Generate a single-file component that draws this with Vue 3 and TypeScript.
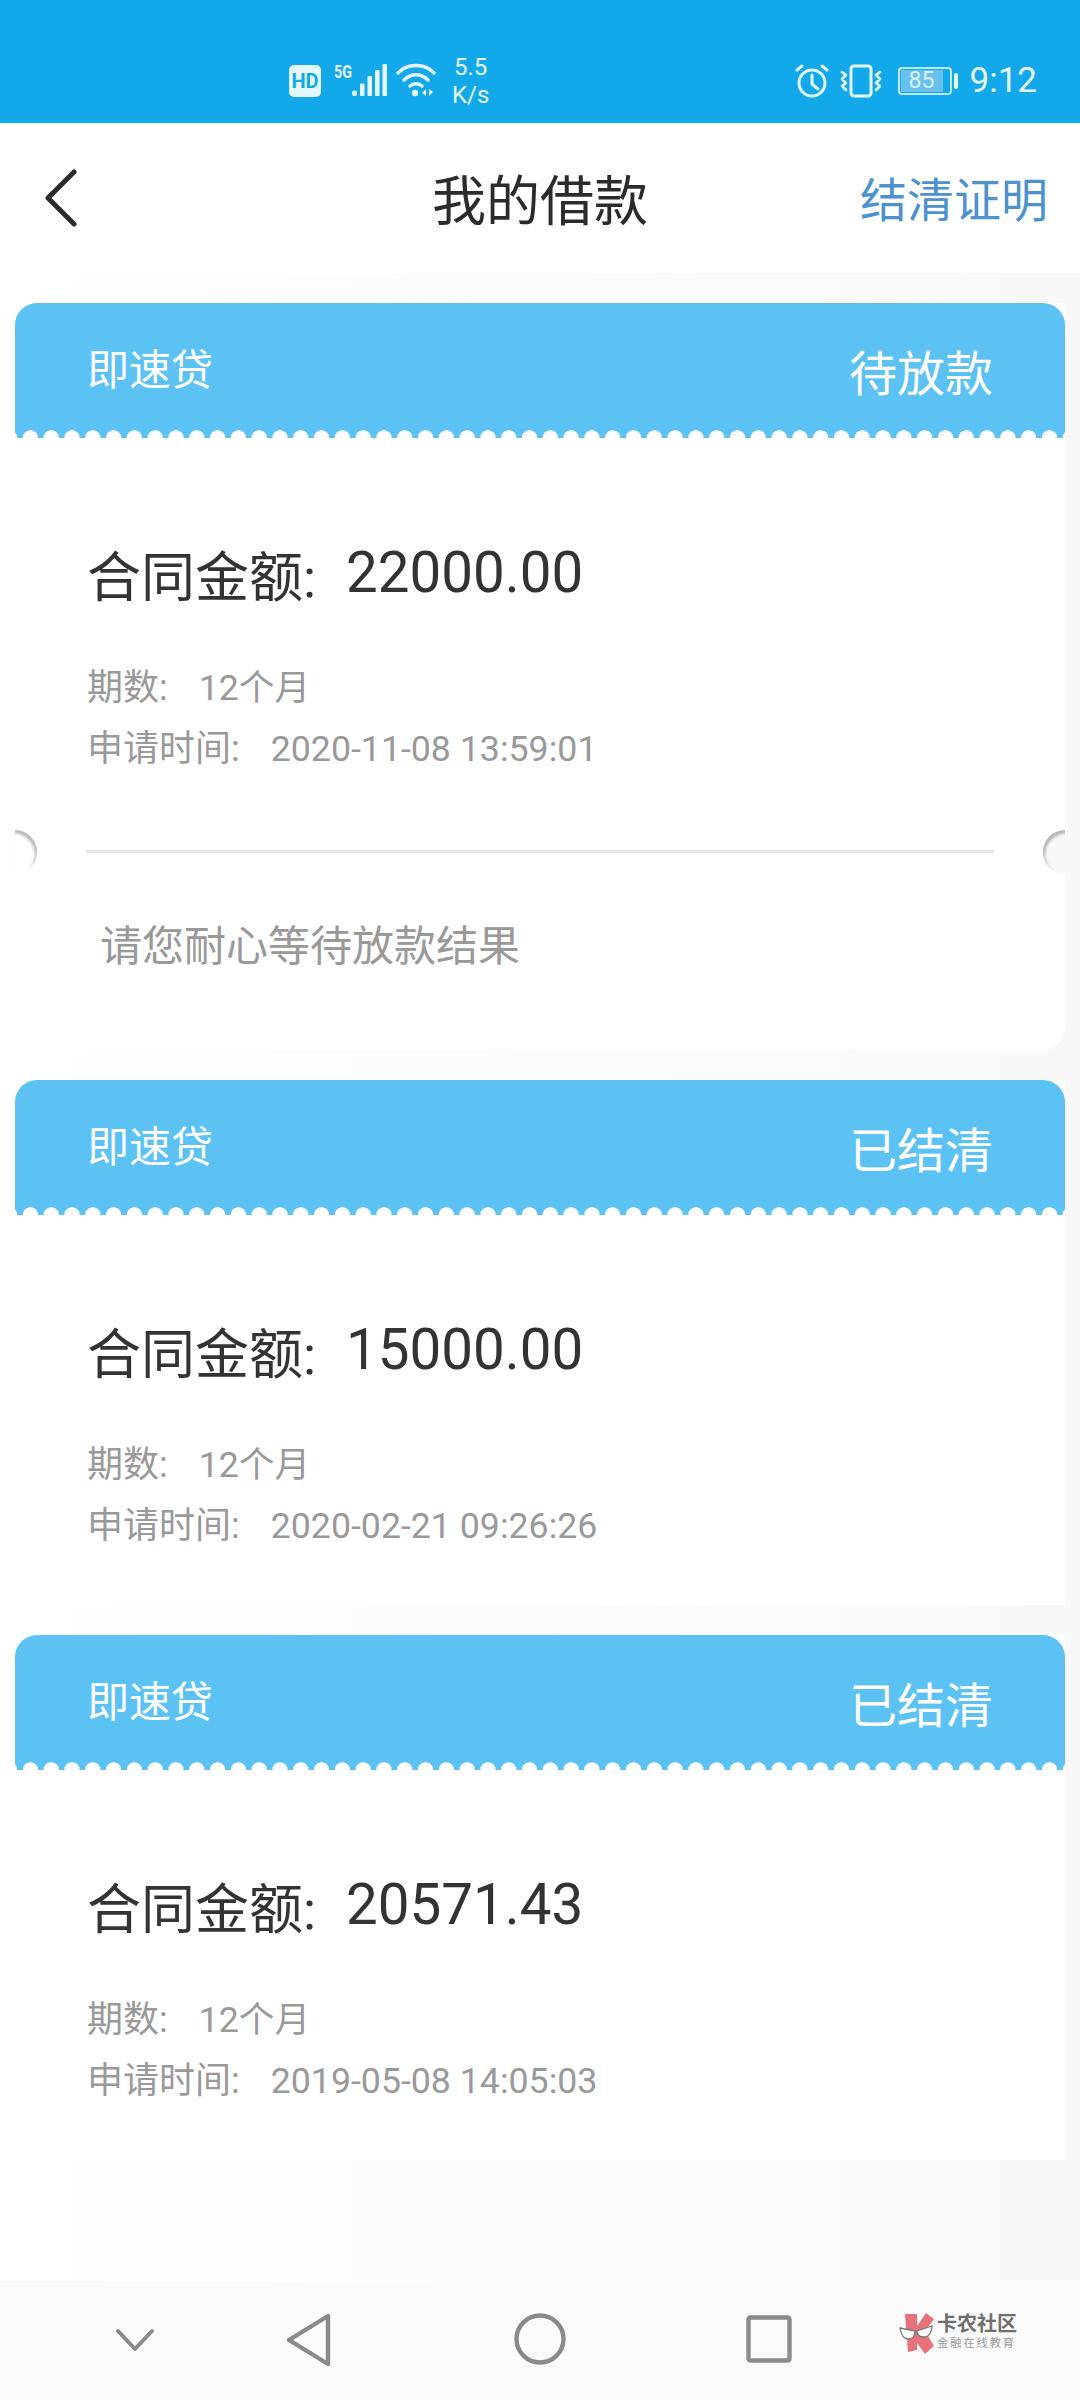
<script setup lang="ts">
interface Loan {
  status: string
  amount: string
  months: string
  applied: string
  note?: string
}

const loans: Loan[] = [
  { status: '待放款', amount: '22000.00', months: '12个月', applied: '2020-11-08 13:59:01', note: '请您耐心等待放款结果' },
  { status: '已结清', amount: '15000.00', months: '12个月', applied: '2020-02-21 09:26:26' },
  { status: '已结清', amount: '20571.43', months: '12个月', applied: '2019-05-08 14:05:03' },
]
</script>

<template>
  <div class="page">
    <div class="status-bar">
      <div class="status-left">
        <span class="hd">HD</span>
        <svg class="signal" width="53" height="33" viewBox="0 0 53 33">
          <text x="0" y="14" class="five-g" textLength="18" lengthAdjust="spacingAndGlyphs">5G</text>
          <g fill="#e3f7ff">
            <rect x="18" y="26.5" width="5" height="5.5" rx="2" />
            <rect x="26" y="19.5" width="4.5" height="12.5" rx="1" />
            <rect x="33.5" y="12" width="4.5" height="20" rx="1" />
            <rect x="41" y="6" width="4.5" height="26" rx="1" />
            <rect x="48.5" y="0" width="4.5" height="32" rx="1" />
          </g>
        </svg>
        <svg class="wifi" width="40" height="33" viewBox="0 0 40 33" fill="none" stroke="#e3f7ff" stroke-width="3.4" stroke-linecap="round">
          <path d="M2 9C11 -1 29 -1 38 9" />
          <path d="M8 16C15 9 25 9 32 16" />
          <path d="M14 22C17 19 23 19 26 22" />
          <circle cx="19" cy="29" r="3.2" fill="#e3f7ff" stroke="none" />
          <path d="M30 25v7l-4-3zM33 25v7l4-4z" fill="#e3f7ff" stroke="none" />
        </svg>
        <span class="speed">5.5<br />K/s</span>
      </div>
      <div class="status-right">
        <svg class="alarm" width="34" height="34" viewBox="0 0 34 34" fill="none" stroke="#e3f7ff" stroke-width="3" stroke-linecap="round">
          <circle cx="17" cy="19" r="13" />
          <path d="M17 11v9l6 5" />
          <path d="M2 6l5-4M32 6l-5-4" />
        </svg>
        <svg class="vibrate" width="44" height="34" viewBox="0 0 44 34" fill="none" stroke="#e3f7ff" stroke-width="3" stroke-linecap="round" stroke-linejoin="round">
          <rect x="12" y="2" width="20" height="30" rx="3" />
          <path d="M3 8l4 3-4 4 4 4-4 3 4 4M41 8l-4 3 4 4-4 4 4 3-4 4" stroke-width="2.6" />
        </svg>
        <div class="battery">
          <span class="battery-shell"><span class="battery-level">85</span></span>
          <span class="battery-cap"></span>
        </div>
        <span class="clock">9:12</span>
      </div>
    </div>

    <header class="nav-bar">
      <svg class="back" width="34" height="58" viewBox="0 0 34 58" fill="none" stroke="#2b2b2b" stroke-width="5" stroke-linecap="round" stroke-linejoin="round">
        <path d="M30 3L4 29l26 26" />
      </svg>
      <h1 class="title">我的借款</h1>
      <span class="proof">结清证明</span>
    </header>

    <main class="list">
      <section v-for="(loan, i) in loans" :key="i" class="card" :class="{ 'has-note': loan.note }">
        <div class="card-head">
          <span class="product">即速贷</span>
          <span class="status">{{ loan.status }}</span>
        </div>
        <div class="scallop"></div>
        <div class="card-body">
          <p class="amount"><span class="amount-label">合同金额:</span><span class="amount-value">{{ loan.amount }}</span></p>
          <p class="meta"><span class="meta-label">期数:</span><span class="meta-value">{{ loan.months }}</span></p>
          <p class="meta"><span class="meta-label">申请时间:</span><span class="meta-value">{{ loan.applied }}</span></p>
        </div>
        <div v-if="loan.note" class="card-foot">
          <span class="notch notch-left"></span>
          <span class="notch notch-right"></span>
          <div class="divider"></div>
          <p class="note">{{ loan.note }}</p>
        </div>
      </section>
    </main>

    <footer class="sys-nav">
      <svg class="nav-down" width="40" height="24" viewBox="0 0 40 24" fill="none" stroke="#8a8a8a" stroke-width="4" stroke-linecap="round" stroke-linejoin="round">
        <path d="M3 3l17 18L37 3" />
      </svg>
      <svg class="nav-back" width="46" height="54" viewBox="0 0 46 54" fill="none" stroke="#8a8a8a" stroke-width="4.4" stroke-linejoin="round">
        <path d="M42 3v48L3 27z" />
      </svg>
      <svg class="nav-home" width="52" height="52" viewBox="0 0 52 52" fill="none" stroke="#8a8a8a" stroke-width="4.4">
        <circle cx="26" cy="26" r="23.5" />
      </svg>
      <svg class="nav-recent" width="46" height="48" viewBox="0 0 46 48" fill="none" stroke="#8a8a8a" stroke-width="4.4" stroke-linejoin="round">
        <rect x="2.5" y="2.5" width="41" height="43" rx="2" />
      </svg>
      <div class="logo">
        <svg width="36" height="41" viewBox="0 0 36 41">
          <path d="M6 1h12v12L27 0l8 6-9 12 9 15-9 8-8-11v7L9 39z" fill="#e8727a" />
          <path d="M1 15l15 3c0 5-2 8-7 8s-7-5-8-11zM18 18l15-5c0 6-3 11-8 11s-7-3-7-6z" fill="#fff" stroke="#777" stroke-width="1.3" />
        </svg>
        <div class="logo-text">
          <span class="logo-name">卡农社区</span>
          <span class="logo-sub">金融在线教育</span>
        </div>
      </div>
    </footer>
  </div>
</template>

<style scoped>
.page {
  width: 1080px;
  height: 2400px;
  display: flex;
  flex-direction: column;
  background: linear-gradient(90deg, #fff 0%, #fdfdfd 25%, #f8f8f8 100%);
  font-family: Roboto, "Noto Sans CJK SC", sans-serif;
  overflow: hidden;
}

/* Status bar */
.status-bar {
  height: 123px;
  flex: none;
  display: flex;
  justify-content: space-between;
  align-items: center;
  padding: 38px 43px 0 289px;
  box-sizing: border-box;
  background: #12a8ea;
  color: #e3f7ff;
}

.status-left,
.status-right {
  display: flex;
  align-items: center;
}

.hd {
  width: 32px;
  height: 32px;
  border-radius: 5px;
  background: #e3f7ff;
  color: #12a8ea;
  font-size: 20px;
  font-weight: 700;
  line-height: 32px;
  text-align: center;
}

.signal {
  margin-left: 13px;
  overflow: visible;
}

.wifi {
  margin-left: 9px;
  overflow: visible;
}

.five-g {
  font-family: Roboto, sans-serif;
  font-size: 18px;
  font-weight: 700;
  fill: #e3f7ff;
}

.speed {
  margin-left: 16px;
  font-size: 24px;
  line-height: 28px;
  text-align: center;
}

.vibrate {
  margin-left: 10px;
}

.battery {
  display: flex;
  align-items: center;
  gap: 2px;
  margin-left: 15px;
}

.battery-shell {
  width: 54px;
  height: 28px;
  padding: 1px;
  box-sizing: border-box;
  border: 2px solid #bfe9fb;
  border-radius: 4px;
}

.battery-level {
  display: block;
  width: 42px;
  height: 22px;
  background: #68c0ef;
  color: #d8f2fd;
  font-size: 23px;
  line-height: 22px;
  text-align: center;
}

.battery-cap {
  width: 4px;
  height: 16px;
  border-radius: 2px;
  background: #e3f7ff;
}

.clock {
  margin-left: 12px;
  font-size: 35px;
  line-height: 40px;
}

/* Navigation */
.nav-bar {
  height: 150px;
  flex: none;
  position: relative;
  display: flex;
  justify-content: center;
  align-items: center;
  background: #fff;
}

.back {
  position: absolute;
  left: 44px;
  top: 46px;
}

.title {
  margin: 10px 0 0;
  color: #2b2b2b;
  font-size: 54px;
  font-weight: 400;
  line-height: 70px;
}

.proof {
  position: absolute;
  right: 32px;
  top: 47px;
  color: #4c92cf;
  font-size: 47px;
  line-height: 62px;
}

/* Loan cards */
.list {
  flex: 1;
  display: flex;
  flex-direction: column;
  gap: 30px;
  padding: 30px 15px 0;
}

.card {
  height: 525px;
  flex: none;
  background: #fff;
}

.card.has-note {
  height: 747px;
  border-radius: 0 0 22px 22px;
}

.card-head {
  height: 135px;
  box-sizing: border-box;
  display: flex;
  justify-content: space-between;
  align-items: center;
  padding: 0 72px;
  border-radius: 22px 22px 0 0;
  background: #5bc2f3;
  color: #fff;
}

.product {
  font-size: 42px;
  line-height: 54px;
}

.status {
  margin-top: 9px;
  font-size: 48px;
  line-height: 64px;
}

.scallop {
  height: 8px;
  margin-top: -8px;
  position: relative;
  background: radial-gradient(circle at 10.4px 8px, #fff 7.4px, transparent 8px) 5px 0 / 20.8px 8px repeat-x;
}

.card-body {
  padding: 97px 0 0 72px;
}

.amount {
  margin: 0 0 47px;
  display: flex;
  align-items: center;
  height: 76px;
  color: #333;
}

.amount-label {
  font-size: 54px;
  margin-right: 30px;
}

.amount-value {
  font-size: 56.5px;
}

.meta {
  margin: 0;
  height: 61px;
  color: #999;
  font-size: 36px;
  line-height: 61px;
}

.meta-label {
  margin-right: 31px;
}

.meta-value {
  font-size: 35.7px;
}

.card-foot {
  position: relative;
  padding-top: 70px;
}

.divider {
  height: 3px;
  margin: 0 71px;
  background: #e5e5e5;
}

.note {
  margin: 0;
  padding: 66px 0 0 85px;
  color: #999;
  font-size: 42px;
  line-height: 56px;
}

.notch {
  position: absolute;
  top: 50px;
  width: 22px;
  height: 44px;
}

.notch-left {
  left: 0;
  background: #fff;
  border-radius: 0 22px 22px 0;
  box-shadow: inset -2px 3px 3px rgba(0, 0, 0, 0.28);
}

.notch-right {
  right: 0;
  background: #f8f8f8;
  border-radius: 22px 0 0 22px;
  box-shadow: inset 2px 3px 3px rgba(0, 0, 0, 0.28);
}

/* System navigation */
.sys-nav {
  height: 119px;
  flex: none;
  position: relative;
  background: #fafafa;
}

.sys-nav svg {
  position: absolute;
}

.nav-down {
  left: 115px;
  top: 47px;
}

.nav-back {
  left: 286px;
  top: 32px;
}

.nav-home {
  left: 514px;
  top: 32px;
}

.nav-recent {
  left: 746px;
  top: 34px;
}

.logo {
  position: absolute;
  left: 899px;
  top: 32px;
  display: flex;
}

.logo .logo-text {
  display: flex;
  flex-direction: column;
  margin-left: 38px;
}

.logo-name {
  color: #6f6f6f;
  font-size: 20px;
  font-weight: 700;
  line-height: 22px;
  white-space: nowrap;
}

.logo-sub {
  color: #9a9a9a;
  font-size: 11.5px;
  letter-spacing: 1.6px;
  line-height: 16px;
  white-space: nowrap;
}
</style>
